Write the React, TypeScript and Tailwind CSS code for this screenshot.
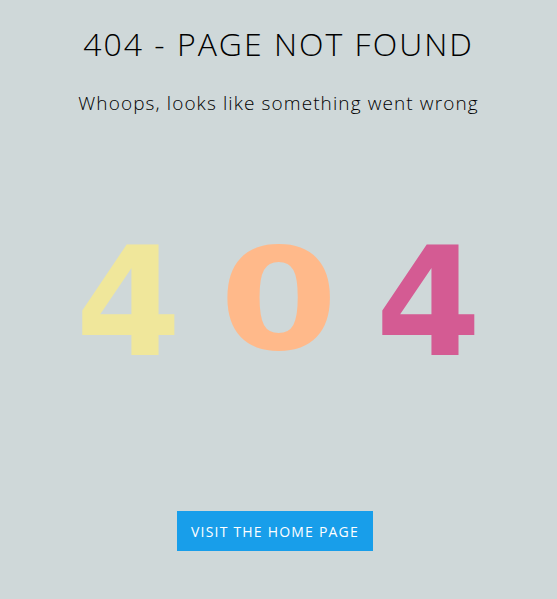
export default function App() {
  return (
    <div
      className="min-h-[599px] w-full bg-[#cfd8d9] flex flex-col items-center text-black"
      style={{ fontFamily: '"Open Sans", "DejaVu Sans", sans-serif' }}
    >
      <h1 className="mt-[22px] text-[32px] leading-[44px] font-light tracking-[2px]">
        404 - PAGE NOT FOUND
      </h1>
      <p className="mt-[24px] text-[19px] leading-[26px] font-light tracking-[1.1px]">
        Whoops, looks like something went wrong
      </p>
      <div
        className="mt-[122px] flex items-end justify-center font-bold h-[130px]"
        style={{ fontFamily: '"DejaVu Sans", sans-serif' }}
      >
        <span className="w-[150px] text-center text-[152px] leading-[130px] text-[#f0e79b]">4</span>
        <span className="w-[150px] text-center text-[140px] leading-[130px] mb-[2px] text-[#ffb98a]">
          <span className="inline-block scale-x-[1.22]">0</span>
        </span>
        <span className="w-[150px] text-center text-[152px] leading-[130px] text-[#d45b93]">4</span>
      </div>
      <button className="mt-[143px] mr-[7px] w-[196px] h-[40px] bg-[#189eea] text-white text-[14px] tracking-[1.2px]">
        VISIT THE HOME PAGE
      </button>
    </div>
  );
}
